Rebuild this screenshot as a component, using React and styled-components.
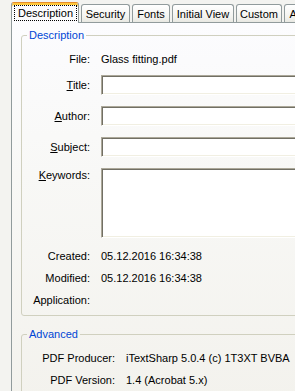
import styled, { createGlobalStyle } from "styled-components";

// fondo y fuente de la pagina, como un dialogo de windows xp
const Global = createGlobalStyle`
  html, body {
    margin: 0;
    overflow: hidden;
    background: #f3f3f0;
    font-family: "Liberation Sans", Arial, sans-serif;
    font-size: 11px;
    color: #000;
  }
`

const Page = styled.div`
  width: 340px;
  height: 391px;
  padding: 2px 0 0 11px;
  box-sizing: border-box;
  display: flex;
  flex-direction: column;
`

const TabStrip = styled.div`
  display: flex;
  align-items: flex-end;
  gap: 2px;
  height: 20px;
  position: relative;
  z-index: 1;
`

// la pestaña activa es mas alta y tapa el borde del panel
const Tab = styled.div`
  width: ${props => props.$w}px;
  height: ${props => props.$active ? 21 : 18}px;
  margin-bottom: ${props => props.$active ? -1 : 0}px;
  box-sizing: border-box;
  border: 1px solid #919b9c;
  border-bottom: none;
  border-radius: 3px 3px 0 0;
  background: ${props => props.$active ? '#fcfcfe' : 'linear-gradient(#ffffff, #f3f3ef 70%, #e8e8e2)'};
  display: flex;
  justify-content: center;
  align-items: center;
  white-space: nowrap;
  flex-shrink: 0;

  &.active {
    border-top: 1px solid #e68b2c;
    box-shadow: inset 0 2px #ffc83c;
    align-items: stretch;
    padding: 2px 1px 2px 2px;
  }
`

const Focus = styled.span`
  flex: 1;
  border: 1px dotted #000;
  display: flex;
  align-items: center;
  justify-content: center;
`

const Panel = styled.div`
  flex: 1;
  border-left: 1px solid #919b9c;
  border-top: 1px solid #919b9c;
  background: linear-gradient(#fcfcfe, #f8f8f6 40%, #f3f2ed);
  padding: 0 0 0 9px;
`

const Group = styled.fieldset`
  margin: ${props => props.$mt}px 0 0 0;
  padding: 0 0 ${props => props.$pb}px 0;
  width: 330px;
  box-sizing: border-box;
  border: 1px solid #d0d0bf;
  border-radius: 3px;
  min-width: 0;
`

const Legend = styled.legend`
  color: #0046d5;
  padding: 0 2px;
  margin-left: 5px;
  line-height: 12px;
`

const Row = styled.div`
  display: grid;
  grid-template-columns: ${props => props.$lw}px 1fr;
  column-gap: 11px;
  align-items: ${props => props.$top ? 'start' : 'center'};
  height: ${props => props.$h || 20}px;
  margin-top: ${props => props.$mt}px;
`

const Label = styled.span`
  text-align: right;
  white-space: nowrap;
  line-height: 13px;
  padding-top: ${props => props.$top ? 1 : 0}px;
`

const Value = styled.span`
  white-space: nowrap;
  line-height: 13px;
`

const Box = styled.input`
  box-sizing: border-box;
  height: 100%;
  width: 100%;
  margin: 0;
  padding: 0 3px;
  background: #fff;
  font: inherit;
  border: 1px solid;
  border-color: #aca899 #ffffff #ffffff #aca899;
  box-shadow: inset 1px 1px #716f64, inset -1px -1px #f1efe2;
  outline: none;
`

const Area = styled(Box).attrs({ as: 'textarea' })`
  resize: none;
`

const tabs = [
  { name: 'Description', w: 68 },
  { name: 'Security', w: 49 },
  { name: 'Fonts', w: 38 },
  { name: 'Initial View', w: 62 },
  { name: 'Custom', w: 46 },
  { name: 'Advanced', w: 60 },
]

function App() {
  return (
    <Page>
      <Global />
      <TabStrip>
        {tabs.map((t, i) => i === 0
          ? <Tab key={t.name} $w={t.w} $active className="active"><Focus>{t.name}</Focus></Tab>
          : <Tab key={t.name} $w={t.w}>{t.name}</Tab>
        )}
      </TabStrip>
      <Panel>
        <Group $mt={6} $pb={5}>
          <Legend>Description</Legend>
          <Row $lw={68} $mt={8}>
            <Label>File:</Label>
            <Value>Glass fitting.pdf</Value>
          </Row>
          <Row $lw={68} $mt={6}>
            <Label><u>T</u>itle:</Label>
            <Box readOnly />
          </Row>
          <Row $lw={68} $mt={11}>
            <Label><u>A</u>uthor:</Label>
            <Box readOnly />
          </Row>
          <Row $lw={68} $mt={11}>
            <Label><u>S</u>ubject:</Label>
            <Box readOnly />
          </Row>
          <Row $lw={68} $mt={11} $h={70} $top>
            <Label $top><u>K</u>eywords:</Label>
            <Area readOnly />
          </Row>
          <Row $lw={68} $mt={8}>
            <Label>Created:</Label>
            <Value>05.12.2016 16:34:38</Value>
          </Row>
          <Row $lw={68} $mt={2}>
            <Label>Modified:</Label>
            <Value>05.12.2016 16:34:38</Value>
          </Row>
          <Row $lw={68} $mt={2}>
            <Label>Application:</Label>
            <Value></Value>
          </Row>
        </Group>
        <Group $mt={12} $pb={10}>
          <Legend>Advanced</Legend>
          <Row $lw={93} $mt={8}>
            <Label>PDF Producer:</Label>
            <Value>iTextSharp 5.0.4 (c) 1T3XT BVBA</Value>
          </Row>
          <Row $lw={93} $mt={2}>
            <Label>PDF Version:</Label>
            <Value>1.4 (Acrobat 5.x)</Value>
          </Row>
        </Group>
      </Panel>
    </Page>
  );
}

export default App;
